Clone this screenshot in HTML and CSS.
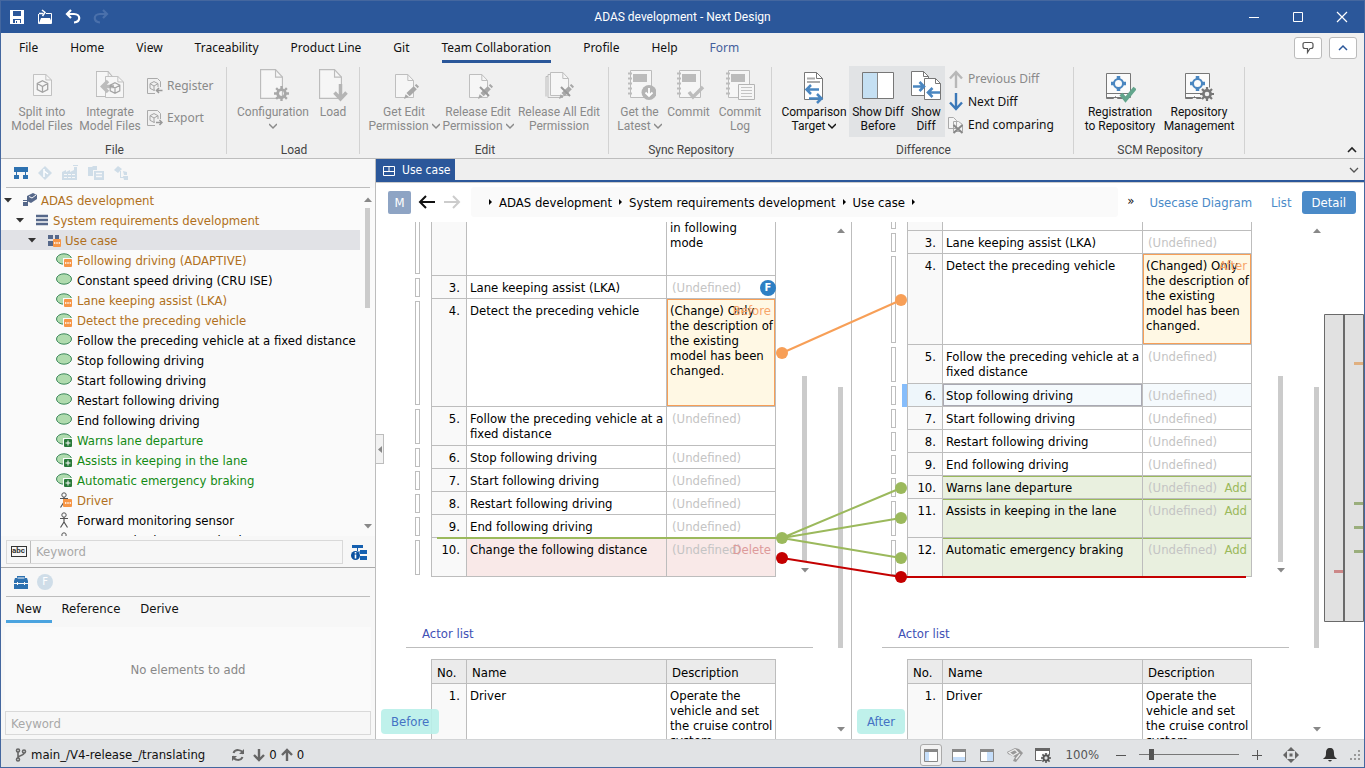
FILE: index.html
```html
<!DOCTYPE html>
<html lang="en">
<head>
    <meta charset="UTF-8">
    <meta name="viewport" content="width=device-width, initial-scale=1.0">
    <title>ADAS development - Next Design</title>
    <link rel="stylesheet" href="styles.css">
</head>
<body>
    <!-- Shared icons -->
    <svg class="sprite" width="0" height="0">
        <symbol id="i-oval" viewBox="0 0 18 16"><ellipse cx="8" cy="7" rx="7.5" ry="5.2" fill="#b0dbae" stroke="#3f8a5c"/></symbol>
        <symbol id="i-oval-mod" viewBox="0 0 18 16"><ellipse cx="8" cy="7" rx="7.5" ry="5.2" fill="#b0dbae" stroke="#3f8a5c"/><rect x="7" y="6" width="10" height="10" fill="#fafafa"/><rect x="8" y="7" width="8" height="8" rx="1" fill="#f79646"/><path d="M9 11h1.4M11.3 11h1.4M13.6 11h1.4" stroke="#fff" stroke-width="1.4"/></symbol>
        <symbol id="i-oval-add" viewBox="0 0 18 16"><ellipse cx="8" cy="7" rx="7.5" ry="5.2" fill="#b0dbae" stroke="#3f8a5c"/><rect x="7" y="6" width="10" height="10" fill="#fafafa"/><rect x="8" y="7" width="8" height="8" rx="1" fill="#2a7a3a"/><path d="M12 8.500v5M9.500 11h5" stroke="#fff"/></symbol>
        <symbol id="i-actor" viewBox="0 0 18 16"><g fill="none" stroke="#555"><circle cx="8" cy="3" r="2.200"/><path d="M4 6.500h8M8 5v5M8 10l-3.500 5.500M8 10l3.500 5.500" stroke-width="1.200"/></g></symbol>
        <symbol id="i-actor-mod" viewBox="0 0 18 16"><g fill="none" stroke="#555"><circle cx="8" cy="3" r="2.200"/><path d="M4 6.500h8M8 5v5M8 10l-3.500 5.500" stroke-width="1.200"/></g><rect x="7" y="7" width="9" height="8" rx="1" fill="#f79646"/><path d="M9 11h1.4M11.3 11h1.4M13.6 11h1.4" stroke="#fff" stroke-width="1.4"/></symbol>
        <symbol id="i-cube" viewBox="0 0 12 12"><path d="M6 .7l4.800 2.500v5.600L6 11.300 1.200 8.800V3.200zM1.200 3.200L6 6l4.800-2.800M6 6v5.300" fill="none" stroke="#a4a4a4" stroke-width="1.200"/></symbol>
        <symbol id="i-page" viewBox="0 0 20 24" preserveAspectRatio="none"><path d="M.5.5h13l6 6v17H.5z" fill="#f6f6f6" stroke="#bcbcbc"/><path d="M13.500.5v6h6" fill="none" stroke="#bcbcbc"/></symbol>
        <symbol id="i-gear" viewBox="0 0 14 14"><circle cx="7" cy="7" r="3.600" fill="none" stroke="currentColor" stroke-width="2.600"/><path d="M7 0v3M7 11v3M0 7h3M11 7h3M2 2l2.200 2.200M9.800 9.800L12 12M12 2L9.800 4.200M4.200 9.800L2 12" stroke="currentColor" stroke-width="2.200"/></symbol>
        <symbol id="i-pencil" viewBox="0 0 14 14"><path d="M0 14l1.500-4.500L4.500 12zM2.300 8.500L9 2l3 3-6.700 6.500zM10 1.200L11.500 0 14 2.400 12.800 4z" fill="#a8a8a8"/></symbol>
        <symbol id="i-book" viewBox="0 0 26 29"><path d="M3.500.5h21v27h-21z" fill="#f6f6f6" stroke="#bcbcbc"/><path d="M6 4h14v8H6z" fill="#bcbcbc"/><path d="M1 3.500h4M1 8.500h4M1 13.500h4M1 18.500h4M1 23.500h4" stroke="#bcbcbc" stroke-width="2"/></symbol>
        <symbol id="i-down" viewBox="0 0 8 8"><path d="M0 2l4 4 4-4" fill="none" stroke="currentColor" stroke-width="1.500"/></symbol>
        <symbol id="i-repo" viewBox="0 0 30 32"><path d="M2.500 2.500h24v24h-24z" fill="#fbfbfb" stroke="#777"/><path d="M2.500 22.500h24M2.500 22.500v5h7l2-2 2 2h6" fill="none" stroke="#777"/><circle cx="14.500" cy="12.500" r="4.500" fill="none" stroke="#4a86c0" stroke-width="2"/><path d="M14.500 5v3M14.500 17v3M7 12.500h3M19 12.500h3" stroke="#4a86c0" stroke-width="3.500"/></symbol>
        <symbol id="i-caret" viewBox="0 0 8 5"><path d="M0 0h8L4 4.500z" fill="currentColor"/></symbol>
    </svg>

    <header class="titlebar">
        <div class="quick">
            <button class="tb" aria-label="Save"><svg width="16" height="16"><path d="M1 1h14v14H1z" fill="#fff"/><path d="M4 2h8v5H4zM4 10h8v4H4z" fill="#2b579a"/><path d="M6 11h5v4H6z" fill="#fff"/><path d="M7 12h1v2H7z" fill="#2b579a"/></svg></button>
            <button class="tb" aria-label="Open"><svg width="16" height="16"><path d="M1.500 5v9.500h13V4.500H9" fill="none" stroke="#fff"/><path d="M2 14l2-5h9l2 5z" fill="#fff"/><path d="M2 4.500h4M5 1l3 2.500L5.500 7" fill="none" stroke="#fff" stroke-width="1.500"/></svg></button>
            <button class="tb" aria-label="Undo"><svg width="16" height="16"><path d="M6 1L2 5l4 4M2 5h7c7 0 7 8 0 8.500" fill="none" stroke="#fff" stroke-width="2.200"/></svg></button>
            <button class="tb" aria-label="Redo" disabled><svg width="16" height="16"><path d="M10 1l4 4-4 4M14 5H7c-7 0-7 8 0 8.500" fill="none" stroke="#4a70ab" stroke-width="2.200"/></svg></button>
        </div>
        <h1 class="title">ADAS development - Next Design</h1>
        <div class="winbtns">
            <button class="tb" aria-label="Minimize"><svg width="14" height="14"><path d="M2 7.500h10" stroke="#fff"/></svg></button>
            <button class="tb" aria-label="Maximize"><svg width="14" height="14"><path d="M2.500 2.500h9v9h-9z" fill="none" stroke="#fff"/></svg></button>
            <button class="tb" aria-label="Close"><svg width="14" height="14"><path d="M2 2l10 10M12 2L2 12" stroke="#fff" stroke-width="1.200"/></svg></button>
        </div>
    </header>

    <nav class="menu">
        <a href="#">File</a>
        <a href="#">Home</a>
        <a href="#">View</a>
        <a href="#">Traceability</a>
        <a href="#">Product Line</a>
        <a href="#">Git</a>
        <a href="#" class="active">Team Collaboration</a>
        <a href="#">Profile</a>
        <a href="#">Help</a>
        <a href="#" class="blue">Form</a>
        <div class="menu-right">
            <button aria-label="Feedback"><svg width="14" height="14"><path d="M4 1.500h6q2 0 2 2v2q0 2-2 2H9l-2.500 4v-4H4q-2 0-2-2v-2q0-2 2-2z" fill="none" stroke="#555" stroke-width="1.200"/></svg></button>
            <button aria-label="Collapse"><svg width="12" height="12"><path d="M2 8l4-4 4 4" fill="none" stroke="#2b579a" stroke-width="1.500"/></svg></button>
        </div>
    </nav>

    <section class="ribbon">
        <div class="group">
            <div class="tools">
                <button class="big w68" disabled><svg width="30" height="36"><use href="#i-page" x="6" y="5" width="19" height="22"/><use href="#i-cube" x="9" y="11" width="13" height="13"/></svg><span>Split into<br>Model Files</span></button>
                <button class="big w68" disabled><svg width="30" height="36"><use href="#i-page" x="1" y="2" width="18" height="26"/><use href="#i-page" x="10" y="7" width="19" height="22"/><path d="M19 17.500H8M13 12l-5.500 5.500L13 23" fill="none" stroke="#bcbcbc" stroke-width="3.500"/><use href="#i-cube" x="14" y="13" width="12" height="12"/></svg><span>Integrate<br>Model Files</span></button>
                <div class="smalls w77 two">
                    <button class="small" disabled><svg width="16" height="18"><path d="M.5 1.500h10l3 3v12H.5z" fill="none" stroke="#aaa"/><use href="#i-cube" x="2" y="4" width="10" height="10"/><path d="M8 10h8v8H8z" fill="#f0f0f0"/><path d="M15.500 13.500h-6M12 11l-2.500 2.500L12 16" fill="none" stroke="#999" stroke-width="1.500"/></svg>Register</button>
                    <button class="small" disabled><svg width="16" height="18"><path d="M.5 1.500h10l3 3v12H.5z" fill="none" stroke="#aaa"/><use href="#i-cube" x="2" y="4" width="10" height="10"/><path d="M8 10h8v8H8z" fill="#f0f0f0"/><path d="M9 13.500h6M12.500 11l2.500 2.500-2.500 2.500" fill="none" stroke="#999" stroke-width="1.500"/></svg>Export</button>
                </div>
            </div>
            <div class="caption">File</div>
        </div>
        <div class="group">
            <div class="tools">
                <button class="big w78" disabled><svg width="32" height="36"><use href="#i-page" x="3" y="0" width="23" height="30"/><use href="#i-gear" x="17" y="17" width="15" height="15" color="#a8a8a8"/></svg><span>Configuration<br><svg class="drop" width="8" height="8"><use href="#i-down"/></svg></span></button>
                <button class="big w42" disabled><svg width="32" height="36"><use href="#i-page" x="2" y="0" width="23" height="30"/><path d="M23.500 15v14M17.500 23.500l6 6.500 6-6.500" fill="none" stroke="#b5b5b5" stroke-width="3.500"/></svg><span>Load</span></button>
            </div>
            <div class="caption">Load</div>
        </div>
        <div class="group">
            <div class="tools">
                <button class="big w74" disabled><svg width="30" height="36"><use href="#i-page" x="6" y="5" width="19" height="24"/><use href="#i-pencil" x="15" y="15" width="15" height="15"/></svg><span>Get Edit<br>Permission <svg class="drop" width="8" height="8"><use href="#i-down"/></svg></span></button>
                <button class="big w74" disabled><svg width="30" height="36"><use href="#i-page" x="6" y="5" width="19" height="24"/><use href="#i-pencil" x="15" y="15" width="15" height="15"/><path d="M17 18l9 9" stroke="#999" stroke-width="2"/></svg><span>Release Edit<br>Permission <svg class="drop" width="8" height="8"><use href="#i-down"/></svg></span></button>
                <button class="big w88" disabled><svg width="30" height="36"><path d="M6.500 5.500H4v23h15M4 7.500H2v20" fill="none" stroke="#bcbcbc"/><use href="#i-page" x="6" y="3" width="19" height="24"/><use href="#i-pencil" x="15" y="15" width="15" height="15"/><path d="M17 18l9 9" stroke="#999" stroke-width="2"/></svg><span>Release All Edit<br>Permission</span></button>
            </div>
            <div class="caption">Edit</div>
        </div>
        <div class="group">
            <div class="tools">
                <button class="big w47" disabled><svg width="32" height="36"><use href="#i-book" x="3" y="1" width="26" height="29"/><circle cx="25" cy="23.500" r="7.500" fill="#b4b4b4"/><path d="M25 19v8M21.500 23.500L25 27l3.500-3.500" fill="none" stroke="#fff" stroke-width="1.800"/></svg><span>Get the<br>Latest <svg class="drop" width="8" height="8"><use href="#i-down"/></svg></span></button>
                <button class="big w51" disabled><svg width="32" height="36"><use href="#i-book" x="3" y="1" width="26" height="29"/><path d="M16 23l4 5 10-10" fill="none" stroke="#bcbcbc" stroke-width="3.500"/></svg><span>Commit</span></button>
                <button class="big w52" disabled><svg width="32" height="36"><use href="#i-book" x="1" y="1" width="26" height="29"/><path d="M14.500 15.500h16v15h-16z" fill="#f6f6f6" stroke="#b4b4b4"/><path d="M17 18.500h11M17 21.500h11M17 24.500h11M17 27.500h11" stroke="#c4c4c4"/></svg><span>Commit<br>Log</span></button>
            </div>
            <div class="caption">Sync Repository</div>
        </div>
        <div class="group">
            <div class="tools">
                <button class="big w70"><svg width="30" height="36"><path d="M5.500 3.500h12l6 6v21h-18z" fill="#fff" stroke="#777"/><path d="M17.500 3.500v6h6" fill="none" stroke="#777"/><path d="M8 9.500h8M8 13h13" stroke="#aaa" stroke-width="2"/><path d="M20 20.500H8M12 16l-4.500 4.500L12 25M10 29.500h12M18 25l4.500 4.500L18 34" fill="none" stroke="#4a86c0" stroke-width="2.500"/></svg><span>Comparison<br>Target <svg class="drop" width="8" height="8"><use href="#i-down"/></svg></span></button>
                <button class="big w58 on"><svg width="34" height="36"><path d="M1.500 3.500h31v26h-31z" fill="#fff" stroke="#777"/><path d="M2 4h14v25H2z" fill="#c5e0f3"/><path d="M16.500 4v25" stroke="#888"/></svg><span>Show Diff<br>Before</span></button>
                <button class="big w38 on"><svg width="32" height="36"><path d="M1.500 2.500h12l5 5v19h-17z" fill="#fff" stroke="#777"/><path d="M14.500 9.500h11l5 5v16h-16z" fill="#fff" stroke="#777"/><path d="M25.500 9.500v5h5M13.500 2.500v5h5" fill="none" stroke="#777"/><path d="M3 17.500h10M9.500 13l4.500 4.500L9.500 22M30 23.500H19M22.500 19L18 23.500l4.500 4.500" fill="none" stroke="#4a86c0" stroke-width="2.600"/></svg><span>Show<br>Diff</span></button>
                <div class="smalls w123">
                    <button class="small" disabled><svg width="16" height="18"><path d="M8 18V2M2 8.500L8 2l6 6.500" fill="none" stroke="#b8b8b8" stroke-width="2.400"/></svg>Previous Diff</button>
                    <button class="small"><svg width="16" height="18"><path d="M8 0v16M2 9.500L8 16l6-6.500" fill="none" stroke="#3b78b8" stroke-width="2.400"/></svg>Next Diff</button>
                    <button class="small"><svg width="16" height="18"><path d="M.5 12.500v-11h5l3 3v8zM5.500 15.500v-10h5l4 3v7z" fill="#f4f4f4" stroke="#aaa"/><path d="M5.500 9l9 8M14.500 9l-9 8" stroke="#888" stroke-width="2"/></svg>End comparing</button>
                </div>
            </div>
            <div class="caption">Difference</div>
        </div>
        <div class="group">
            <div class="tools">
                <button class="big w78"><svg width="32" height="36"><use href="#i-repo" x="0" y="2" width="30" height="32"/><path d="M17 25l4.500 5.500L31 19" fill="none" stroke="#62a58c" stroke-width="4"/></svg><span>Registration<br>to Repository</span></button>
                <button class="big w80"><svg width="32" height="36"><use href="#i-repo" x="0" y="2" width="30" height="32"/><circle cx="24" cy="25" r="7" fill="#f0f0f0"/><use href="#i-gear" x="17" y="18" width="14" height="14" color="#777"/></svg><span>Repository<br>Management</span></button>
            </div>
            <div class="caption">SCM Repository</div>
        </div>
        <button class="pin" aria-label="Collapse ribbon"><svg width="12" height="12"><path d="M2 8l4-4 4 4" fill="none" stroke="#222" stroke-width="1.600"/></svg></button>
    </section>

    <main class="main">
        <aside class="sidebar">
            <div class="bar">
                <svg width="16" height="16"><path d="M1 2h14v5H1zM1 10h5v4H1zM10 10h5v4h-5zM3 7h1v3H3zM12 7h1v3h-1z" fill="#2d71b0"/></svg>
                <svg width="16" height="16"><path d="M8 1l7 7-7 7-7-7z" fill="#cfdde8"/><path d="M7 4v8M7 6l4 3" stroke="#fff" stroke-width="1.500"/></svg>
                <svg width="18" height="16"><path d="M1 15V7l4-2v2l4-2v2l4-2V2h3v13zM12 0h5v1h-5z" fill="#cfdde8"/><path d="M3 9.500h11M3 12.500h11" stroke="#f8f8f8" stroke-dasharray="3 1"/></svg>
                <svg width="18" height="16"><path d="M1 2h4l1-1h4v4H6v6H1zM7 6h10v9H7z" fill="#cfdde8"/><path d="M9 8.500h6M9 11.500h6" stroke="#f8f8f8" stroke-width="1.500"/></svg>
                <svg width="16" height="16"><path d="M5 1l4 3-4 4-4-3zM10 6l4 1v3h-3zM10 11h5v4h-4zM7 6h1v6h3v1H7z" fill="#cfdde8"/></svg>
            </div>
            <div class="treebox">
                <ul class="tree">
                    <li class="l0 mod"><svg class="tri" width="8" height="5"><use href="#i-caret"/></svg><svg width="16" height="16"><path d="M5 4l6-3 4 2v4l-6 4-4-2z" fill="#56688a"/><path d="M7 4.500l3 1.500 4-3" fill="none" stroke="#fafafa"/><path d="M1 8h5v6H1z" fill="#56688a"/><path d="M1 9.500h4" stroke="#fafafa"/></svg>ADAS development</li>
                    <li class="l1 mod"><svg class="tri" width="8" height="5"><use href="#i-caret"/></svg><svg width="16" height="16"><path d="M2 4h12M2 8h12M2 12h12" stroke="#56688a" stroke-width="2.500"/></svg>System requirements development</li>
                    <li class="l2 mod sel"><svg class="tri" width="8" height="5"><use href="#i-caret"/></svg><svg width="16" height="16"><path d="M2 3h5v4H2zM9 3h4v4H9zM2 9h5v5H2z" fill="#56688a"/><rect x="7" y="7" width="8" height="8" rx="1" fill="#f79646"/><path d="M8 11h1.400M10.300 11h1.400M12.600 11h1.400" stroke="#fff" stroke-width="1.400"/></svg>Use case</li>
                    <li class="l3 mod"><svg width="18" height="16"><use href="#i-oval-mod"/></svg>Following driving (ADAPTIVE)</li>
                    <li class="l3"><svg width="18" height="16"><use href="#i-oval"/></svg>Constant speed driving (CRU ISE)</li>
                    <li class="l3 mod"><svg width="18" height="16"><use href="#i-oval-mod"/></svg>Lane keeping assist (LKA)</li>
                    <li class="l3 mod"><svg width="18" height="16"><use href="#i-oval-mod"/></svg>Detect the preceding vehicle</li>
                    <li class="l3"><svg width="18" height="16"><use href="#i-oval"/></svg>Follow the preceding vehicle at a fixed distance</li>
                    <li class="l3"><svg width="18" height="16"><use href="#i-oval"/></svg>Stop following driving</li>
                    <li class="l3"><svg width="18" height="16"><use href="#i-oval"/></svg>Start following driving</li>
                    <li class="l3"><svg width="18" height="16"><use href="#i-oval"/></svg>Restart following driving</li>
                    <li class="l3"><svg width="18" height="16"><use href="#i-oval"/></svg>End following driving</li>
                    <li class="l3 add"><svg width="18" height="16"><use href="#i-oval-add"/></svg>Warns lane departure</li>
                    <li class="l3 add"><svg width="18" height="16"><use href="#i-oval-add"/></svg>Assists in keeping in the lane</li>
                    <li class="l3 add"><svg width="18" height="16"><use href="#i-oval-add"/></svg>Automatic emergency braking</li>
                    <li class="l3 mod"><svg width="18" height="16"><use href="#i-actor-mod"/></svg>Driver</li>
                    <li class="l3"><svg width="18" height="16"><use href="#i-actor"/></svg>Forward monitoring sensor</li>
                    <li class="l3"><svg width="18" height="16"><use href="#i-actor"/></svg>Rear monitoring sensor back</li>
                </ul>
                <div class="scroll tree-scroll"><svg class="up" width="8" height="5"><use href="#i-caret"/></svg><i class="thumb"></i><svg width="8" height="5"><use href="#i-caret"/></svg></div>
            </div>
            <div class="search">
                <div class="field">
                    <button class="abc" aria-label="Match mode"><span>abc</span></button>
                    <input type="text" placeholder="Keyword" aria-label="Tree keyword">
                </div>
                <svg width="18" height="18"><path d="M2 2h11v3H2zM10 7h7v4h-7zM10 13h7v4h-7zM7 5h1v3H7zM8 8.500h2v1H8z" fill="#1560b0"/><circle cx="5.500" cy="12.500" r="4.500" fill="#0a50a0"/><path d="M5.500 9v1.500M5.500 11.500v4" stroke="#fff" stroke-width="1.600"/></svg>
            </div>
            <div class="bar toolbox">
                <svg width="16" height="16"><path d="M4 4V2h8v2h2l1 3v8H1V7l1-3z" fill="#2d71b0"/><path d="M4.500 4h7M1 9.500h14" stroke="#f8f8f8"/><path d="M4.500 8v3M11.500 8v3" stroke="#f8f8f8"/></svg>
                <span class="fdot">F</span>
            </div>
            <div class="subtabs">
                <button class="active">New</button>
                <button>Reference</button>
                <button>Derive</button>
            </div>
            <div class="empty">No elements to add</div>
            <input class="keyword2" type="text" placeholder="Keyword" aria-label="Element keyword">
        </aside>

        <section class="doc">
            <div class="doctabs">
                <a href="#" class="doctab"><svg width="14" height="12"><path d="M1.500 1.500h11v9h-11zM1 6.500h12M7 1v5" fill="none" stroke="#fff"/></svg>Use case</a>
                <svg class="more" width="10" height="10"><path d="M1 3l4 4 4-4" fill="none" stroke="#555" stroke-width="1.300"/></svg>
                <button class="collapse" aria-label="Collapse sidebar"><svg width="4" height="7"><path d="M4 0v7L0 3.500z" fill="#888"/></svg></button>
            </div>
            <div class="crumbbar">
                <span class="m">M</span>
                <svg width="18" height="14"><path d="M17 7H2M8 1L2 7l6 6" fill="none" stroke="#111" stroke-width="2"/></svg>
                <svg width="18" height="14"><path d="M1 7h15M10 1l6 6-6 6" fill="none" stroke="#ccc" stroke-width="2"/></svg>
                <nav class="crumbs"><i></i><a href="#">ADAS development</a><i></i><a href="#">System requirements development</a><i></i><a href="#">Use case</a><i></i></nav>
                <span class="chev">»</span>
                <nav class="views"><a href="#">Usecase Diagram</a><a href="#">List</a><a href="#" class="current">Detail</a></nav>
            </div>

            <div class="compare">
                <div class="pane">
                    <div class="page">
                        <div class="formgrid">
                            <table class="grid">
                                <colgroup><col class="c-grip"><col class="c-no"><col class="c-name"><col class="c-desc"></colgroup>
                                <tr class="cut59"><td class="grip"></td><td class="no"></td><td></td><td>in following<br>mode</td></tr>
                                <tr><td class="grip"></td><td class="no">3.</td><td>Lane keeping assist (LKA)</td><td class="undef">(Undefined)<b class="fbadge">F</b></td></tr>
                                <tr class="h108"><td class="grip"></td><td class="no">4.</td><td>Detect the preceding vehicle</td><td class="changed">(Change) Only the description of the existing model has been changed.<span class="tag">Before</span></td></tr>
                                <tr class="h39"><td class="grip"></td><td class="no">5.</td><td>Follow the preceding vehicle at a fixed distance</td><td class="undef">(Undefined)</td></tr>
                                <tr><td class="grip"></td><td class="no">6.</td><td>Stop following driving</td><td class="undef">(Undefined)</td></tr>
                                <tr><td class="grip"></td><td class="no">7.</td><td>Start following driving</td><td class="undef">(Undefined)</td></tr>
                                <tr><td class="grip"></td><td class="no">8.</td><td>Restart following driving</td><td class="undef">(Undefined)</td></tr>
                                <tr><td class="grip"></td><td class="no">9.</td><td>End following driving</td><td class="undef">(Undefined)</td></tr>
                                <tr class="h39 deleted"><td class="grip"></td><td class="no">10.</td><td>Change the following distance</td><td class="undef">(Undefined)<span class="tag">Delete</span></td></tr>
                            </table>
                            <div class="scroll inner-scroll"><i class="thumb"></i><svg width="8" height="5"><use href="#i-caret"/></svg></div>
                        </div>
                        <h2>Actor list</h2>
                        <table class="grid actors">
                            <colgroup><col class="c-no"><col class="c-name"><col class="c-desc"></colgroup>
                            <tr><th>No.</th><th>Name</th><th>Description</th></tr>
                            <tr><td class="no">1.</td><td>Driver</td><td>Operate the vehicle and set the cruise control system</td></tr>
                        </table>
                    </div>
                    <div class="scroll outer-scroll"><svg class="up" width="8" height="5"><use href="#i-caret"/></svg><i class="thumb"></i><svg width="8" height="5"><use href="#i-caret"/></svg></div>
                    <span class="side">Before</span>
                </div>
                <div class="pane">
                    <div class="page">
                        <div class="formgrid">
                            <table class="grid">
                                <colgroup><col class="c-grip"><col class="c-no"><col class="c-name"><col class="c-desc"></colgroup>
                                <tr class="cut14"><td class="grip"></td><td class="no"></td><td></td><td></td></tr>
                                <tr><td class="grip"></td><td class="no">3.</td><td>Lane keeping assist (LKA)</td><td class="undef">(Undefined)</td></tr>
                                <tr class="h91"><td class="grip"></td><td class="no">4.</td><td>Detect the preceding vehicle</td><td class="changed">(Changed) Only the description of the existing model has been changed.<span class="tag">After</span></td></tr>
                                <tr class="h39"><td class="grip"></td><td class="no">5.</td><td>Follow the preceding vehicle at a fixed distance</td><td class="undef">(Undefined)</td></tr>
                                <tr class="focus"><td class="grip"></td><td class="no">6.</td><td class="cell">Stop following driving</td><td class="undef">(Undefined)</td></tr>
                                <tr><td class="grip"></td><td class="no">7.</td><td>Start following driving</td><td class="undef">(Undefined)</td></tr>
                                <tr><td class="grip"></td><td class="no">8.</td><td>Restart following driving</td><td class="undef">(Undefined)</td></tr>
                                <tr><td class="grip"></td><td class="no">9.</td><td>End following driving</td><td class="undef">(Undefined)</td></tr>
                                <tr class="added"><td class="grip"></td><td class="no">10.</td><td>Warns lane departure</td><td class="undef">(Undefined)<span class="tag">Add</span></td></tr>
                                <tr class="h39 added"><td class="grip"></td><td class="no">11.</td><td>Assists in keeping in the lane</td><td class="undef">(Undefined)<span class="tag">Add</span></td></tr>
                                <tr class="h39 added"><td class="grip"></td><td class="no">12.</td><td>Automatic emergency braking</td><td class="undef">(Undefined)<span class="tag">Add</span></td></tr>
                            </table>
                            <div class="scroll inner-scroll"><i class="thumb"></i><svg width="8" height="5"><use href="#i-caret"/></svg></div>
                        </div>
                        <h2>Actor list</h2>
                        <table class="grid actors">
                            <colgroup><col class="c-no"><col class="c-name"><col class="c-desc"></colgroup>
                            <tr><th>No.</th><th>Name</th><th>Description</th></tr>
                            <tr><td class="no">1.</td><td>Driver</td><td>Operate the vehicle and set the cruise control system</td></tr>
                        </table>
                    </div>
                    <div class="scroll outer-scroll"><svg class="up" width="8" height="5"><use href="#i-caret"/></svg><i class="thumb"></i><svg width="8" height="5"><use href="#i-caret"/></svg></div>
                    <span class="side">After</span>
                </div>
                <div class="minimap">
                    <svg width="40" height="308"><path d="M.5.5h19v307H.5zM20.500.5h19v307h-19z" fill="#e1e1e1" stroke="#6a6a6a"/><path d="M20 0v308" stroke="#6a6a6a" stroke-width="2"/><path d="M30 49.500h9" stroke="#e0b080" stroke-width="3"/><path d="M30 189.500h9M30 213.500h9M30 237.500h9" stroke="#9aae7c" stroke-width="3"/><path d="M10 257.500h9" stroke="#cc8888" stroke-width="3"/></svg>
                </div>
                <!-- Lines joining the changed rows of both panes -->
                <svg class="links" width="988" height="517" viewBox="376 222 988 517">
                    <path d="M782 353L901 300" stroke="#f79f57" stroke-width="2"/>
                    <circle cx="782" cy="353" r="6" fill="#f79f57"/><circle cx="901" cy="300" r="6" fill="#f79f57"/>
                    <path d="M437 538H782L901 488M782 538L901 518M782 538L901 558" fill="none" stroke="#9bb95c" stroke-width="2"/>
                    <circle cx="782" cy="538" r="6" fill="#9bb95c"/><circle cx="901" cy="488" r="6" fill="#9bb95c"/><circle cx="901" cy="518" r="6" fill="#9bb95c"/><circle cx="901" cy="558" r="6" fill="#9bb95c"/>
                    <path d="M782 558L901 577H1246" fill="none" stroke="#c40000" stroke-width="2"/>
                    <circle cx="782" cy="558" r="6" fill="#c40000"/><circle cx="901" cy="577" r="6" fill="#c40000"/>
                </svg>
            </div>
        </section>
    </main>

    <footer class="status">
        <svg width="12" height="14"><g fill="none" stroke="#666" stroke-width="1.600"><circle cx="3" cy="2.500" r="1.500"/><circle cx="3" cy="11.500" r="1.500"/><circle cx="9" cy="3.500" r="1.500"/><path d="M3 4v6M9 5c0 3-6 2-6 5"/></g></svg>
        <span class="branch">main_/V4-release_/translating</span>
        <svg width="14" height="14"><path d="M12 6C11 1 4 1 2.500 5M2 8c1 5 8 5 9.500 1" fill="none" stroke="#666" stroke-width="2"/><path d="M13 1v5H8zM1 13V8h5z" fill="#666"/></svg>
        <svg class="gap8" width="12" height="14"><path d="M6 1v11M1 7l5 5 5-5" fill="none" stroke="#666" stroke-width="2.400"/></svg>
        <span>0</span>
        <svg width="12" height="14"><path d="M6 13V2M1 7l5-5 5 5" fill="none" stroke="#666" stroke-width="2.400"/></svg>
        <span>0</span>
        <div class="status-right">
            <div class="layouts">
                <button class="pressed" aria-label="Left panel"><svg width="16" height="14"><path d="M1.500 1.500h13v12h-13z" fill="#fff" stroke="#888"/><path d="M1 1h14v3H1z" fill="#888"/><path d="M2 4h4v9H2z" fill="#c5defa"/></svg></button>
                <button aria-label="Bottom panel"><svg width="16" height="14"><path d="M1.500 1.500h13v12h-13z" fill="#fff" stroke="#888"/><path d="M1 1h14v3H1z" fill="#888"/><path d="M2 9h12v4H2z" fill="#c5defa"/></svg></button>
                <button aria-label="Right panel"><svg width="16" height="14"><path d="M1.500 1.500h13v12h-13z" fill="#fff" stroke="#888"/><path d="M1 1h14v3H1z" fill="#888"/><path d="M8 4h6v9H8z" fill="#c5defa"/></svg></button>
                <button aria-label="Model check"><svg width="18" height="16"><path d="M1 5l8-4 4 1 4 4-7 9-3-1 2-4-7-3z" fill="#999"/><path d="M3 5.500l6-3 3 3-5 3zM10 12l4-5" fill="none" stroke="#eee" stroke-width="1.300"/></svg></button>
                <button aria-label="View settings"><svg width="18" height="16"><path d="M1.500 2.500h14v11h-14z" fill="#fff" stroke="#666"/><path d="M1 1h15v3H1z" fill="#666"/><circle cx="12" cy="11" r="5" fill="#e1e3e5"/><use href="#i-gear" x="7" y="6" width="10" height="10" color="#555"/></svg></button>
            </div>
            <span class="zoom">100%</span>
            <svg width="12" height="12"><path d="M1 6.500h10" stroke="#555"/></svg>
            <input type="range" min="0" max="100" value="10" aria-label="Zoom">
            <svg width="12" height="12"><path d="M1 6.500h10M6.500 1v10" stroke="#555"/></svg>
            <svg class="move" width="16" height="16"><path d="M8 0l4 4H4zM8 16l4-4H4zM0 8l4-4v8zM16 8l-4-4v8zM6.500 6.500h3v3h-3z" fill="#666"/></svg>
            <svg class="bell" width="14" height="16"><path d="M7 1c3 0 4 2 4 5 0 4 1 4 3 6H0c2-2 3-2 3-6 0-3 1-5 4-5zM5 13h4q-2 3-4 0z" fill="#333"/></svg>
            <svg width="12" height="12"><path d="M9 1h2v2H9zM5 5h2v2H5zM9 5h2v2H9zM1 9h2v2H1zM5 9h2v2H5zM9 9h2v2H9z" fill="#999"/></svg>
        </div>
    </footer>
</body>
</html>
```
FILE: styles.css
```css
:root {
    --blue: #2b579a;
    --line: #bdbdbd;
    --mod: #b07020;
    --add: #148a14;
    --ui: "Noto Sans", sans-serif;
    --ribbon: Roboto, "Noto Sans", sans-serif;
    --doc: "DejaVu Sans Condensed", "Noto Sans", sans-serif;
}

*, *::before {
    box-sizing: border-box;
}

body {
    margin: 0;
    height: 100vh;
    display: flex;
    flex-direction: column;
    overflow: hidden;
    border: 1px solid #44679f;
    border-top: 0;
    background: #f0f0f0;
    font-family: var(--doc);
    font-size: 13px;
    line-height: 15px;
    color: #111;
}

svg {
    display: block;
    flex-shrink: 0;
}

.sprite {
    position: absolute;
}

button {
    margin: 0;
    padding: 0;
    border: 0;
    background: none;
    font: inherit;
    color: inherit;
}

input {
    font: inherit;
    color: #333;
    border-radius: 0;
}

input::placeholder {
    color: #a8a8a8;
}

a {
    color: inherit;
    text-decoration: none;
}

/* Title bar */
.titlebar {
    height: 33px;
    flex-shrink: 0;
    display: grid;
    grid-template-columns: 1fr auto 1fr;
    align-items: center;
    background: var(--blue);
    border-top: 1px solid #44679f;
    color: #fff;
    font-family: var(--ribbon);
}

.title {
    margin: 0;
    font-size: 12px;
    font-weight: normal;
}

.quick {
    display: flex;
    gap: 12px;
    padding-left: 8px;
}

.winbtns {
    display: flex;
    justify-content: flex-end;
    gap: 30px;
    padding-right: 15px;
}

/* Menu */
.menu {
    height: 33px;
    flex-shrink: 0;
    display: flex;
    align-items: center;
    gap: 32px;
    padding: 0 7px 3px 18px;
    font-family: var(--ui);
    font-size: 12px;
}

.menu > a {
    padding: 7px 0 5px;
    border-bottom: 3px solid transparent;
    height: 30px;
}

.menu .active {
    border-bottom-color: var(--blue);
}

.menu .blue {
    color: #44609c;
}

.menu-right {
    margin-left: auto;
    display: flex;
    gap: 7px;
}

.menu-right button {
    width: 28px;
    height: 22px;
    display: flex;
    align-items: center;
    justify-content: center;
    background: #fff;
    border: 1px solid #bbb;
    border-radius: 3px;
}

/* Ribbon */
.ribbon {
    height: 93px;
    flex-shrink: 0;
    display: flex;
    align-items: flex-start;
    border-bottom: 1px solid var(--line);
    font-family: var(--ribbon);
    font-size: 12px;
    line-height: 14px;
}

.group {
    margin-top: 1px;
    height: 87px;
    padding: 0 5px 0 7px;
    border-right: 1px solid #d2d2d2;
    display: flex;
    flex-direction: column;
}

.tools {
    display: flex;
    margin-top: -1px;
    height: 71px;
}

.caption {
    margin-top: 6px;
    text-align: center;
    color: #444;
}

.big {
    height: 71px;
    padding-top: 3px;
    display: flex;
    flex-direction: column;
    align-items: center;
    text-align: center;
    white-space: nowrap;
}

.drop {
    display: inline-block;
    vertical-align: 0;
}

.big:disabled, .small:disabled {
    color: #8a8a8a;
}

.on {
    background: #e1e3e5;
}

.w42 { width: 42px; }
.w38 { width: 38px; }
.w47 { width: 47px; }
.w51 { width: 51px; }
.w52 { width: 52px; }
.w58 { width: 58px; }
.w68 { width: 68px; }
.w70 { width: 70px; }
.w74 { width: 74px; }
.w77 { width: 77px; }
.w78 { width: 78px; }
.w80 { width: 80px; }
.w88 { width: 88px; }
.w123 { width: 123px; }

.smalls {
    display: flex;
    flex-direction: column;
    padding: 1px 0 0 3px;
}

.smalls.two {
    padding-top: 4px;
}

.two .small {
    height: 32px;
}

.small {
    height: 24px;
    display: flex;
    align-items: center;
    gap: 4px;
    font-family: var(--ui);
    white-space: nowrap;
}

.pin {
    margin: 78px 6px 0 auto;
}

/* Main area */
.main {
    flex: 1;
    min-height: 0;
    display: flex;
}

.sidebar {
    width: 375px;
    flex-shrink: 0;
    display: flex;
    flex-direction: column;
    background: #f7f7f7;
    border-right: 1px solid var(--line);
}

.bar {
    height: 29px;
    margin: 0 5px;
    padding: 0 7px;
    display: flex;
    align-items: center;
    gap: 8px;
    border-bottom: 1px solid var(--line);
}

.treebox {
    flex: 1;
    min-height: 0;
    display: flex;
    padding-top: 2px;
    background: #fafafa;
    overflow: hidden;
}

.tree {
    flex: 1;
    margin: 0;
    padding: 0;
    list-style: none;
    color: #000;
}

.tree li {
    height: 20px;
    display: flex;
    align-items: center;
    gap: 3px;
    white-space: nowrap;
}

.tree .tri {
    margin-right: 7px;
    color: #333;
}

.tree .l0 { padding-left: 3px; }
.tree .l1 { padding-left: 15px; }
.tree .l2 { padding-left: 27px; }
.tree .l3 { padding-left: 55px; }
.tree .mod { color: var(--mod); }
.tree .add { color: var(--add); }
.tree .sel { background: #e1e2e6; }

.scroll {
    width: 15px;
    display: flex;
    flex-direction: column;
    align-items: center;
    color: #888;
}

.scroll .thumb {
    width: 5px;
    background: #cbcbcb;
}

.scroll svg:last-child {
    margin-top: auto;
}

.scroll .up {
    transform: rotate(180deg);
}

.tree-scroll {
    padding: 7px 0;
}

.tree-scroll .thumb {
    height: 100px;
    margin-top: 6px;
}

.search {
    height: 32px;
    display: flex;
    align-items: center;
    gap: 7px;
    padding: 0 7px 0 5px;
    border-bottom: 1px solid #aaa;
}

.field {
    flex: 1;
    display: flex;
    height: 24px;
    border: 1px solid #d9d9d9;
}

.abc {
    width: 24px;
    display: flex;
    align-items: center;
    justify-content: center;
    border-right: 1px solid var(--line);
}

.abc span {
    border: 1px solid #333;
    font-family: var(--ribbon);
    font-size: 8px;
    font-weight: bold;
    line-height: 8px;
    height: 11px;
    width: 16px;
    color: #333;
}

.field input, .keyword2 {
    flex: 1;
    min-width: 0;
    padding: 0 5px;
    border: 0;
    background: none;
}

.toolbox {
    flex-shrink: 0;
}

.fdot {
    width: 16px;
    height: 16px;
    border-radius: 8px;
    background: #cfdde8;
    color: #fff;
    font-size: 11px;
    text-align: center;
}

.subtabs {
    display: flex;
    height: 26px;
    padding-left: 5px;
}

.subtabs button {
    padding: 0 10px 1px;
    border-bottom: 3px solid transparent;
}

.subtabs .active {
    border-bottom-color: #4aa3df;
}

.empty {
    height: 84px;
    margin: 4px 4px 0;
    display: flex;
    align-items: center;
    justify-content: center;
    background: #fafafa;
    color: #888;
}

.keyword2 {
    flex: none;
    height: 24px;
    margin: 0 4px 4px;
    border: 1px solid #d9d9d9;
}

/* Document */
.doc {
    flex: 1;
    min-width: 0;
    display: flex;
    flex-direction: column;
    background: #fff;
}

.doctabs {
    position: relative;
    height: 23px;
    flex-shrink: 0;
    display: flex;
    align-items: center;
    justify-content: space-between;
    padding-right: 5px;
    background: #efefef;
    border-bottom: 2px solid var(--blue);
    box-shadow: 0 1px 0 #ccc;
}

.doctab {
    height: 22px;
    display: flex;
    align-items: center;
    gap: 6px;
    padding: 2px 5px 0 6px;
    background: var(--blue);
    color: #fff;
    font-size: 12px;
}

/* Handle on the edge of the sidebar */
.collapse {
    position: absolute;
    left: 0;
    top: 275px;
    width: 8px;
    height: 30px;
    padding-left: 2px;
    background: #f2f2f2;
    border: 1px solid var(--line);
    border-left: 0;
}

.crumbbar {
    height: 40px;
    flex-shrink: 0;
    display: flex;
    align-items: center;
    gap: 7px;
    padding: 0 8px 0 12px;
}

.m {
    width: 23px;
    height: 23px;
    border-radius: 2px;
    background: #8ea4c4;
    color: #fff;
    line-height: 23px;
    text-align: center;
}

.crumbs {
    flex: 1;
    height: 30px;
    margin-left: 3px;
    display: flex;
    align-items: center;
    gap: 7px;
    padding-left: 18px;
    background: #fafafa;
    border-radius: 3px;
    color: #000;
}

.crumbs i {
    border: 3px solid transparent;
    border-left-color: #000;
    border-right: 0;
}

.chev {
    padding: 0 8px 4px 2px;
}

.views {
    display: flex;
    align-items: center;
    gap: 10px;
    color: #4a8ac8;
}

.views a:first-child {
    margin-right: 9px;
}

.views .current {
    height: 23px;
    padding: 4px 10px;
    background: #4a8ac8;
    color: #fff;
    border-radius: 3px;
}

/* Comparison panes */
.compare {
    position: relative;
    flex: 1;
    min-height: 0;
    display: grid;
    grid-template-columns: 1fr 1fr 36px;
    overflow: hidden;
}

.pane {
    position: relative;
    min-width: 0;
    display: flex;
    overflow: hidden;
    border-right: 1px solid var(--line);
}

.pane + .pane {
    border-right: 0;
    padding-right: 1px;
}

.page {
    flex: 1;
    padding-left: 30px;
}

.formgrid {
    display: flex;
    height: 355px;
    padding-left: 9px;
}

.grid {
    border-collapse: separate;
    border-spacing: 0;
    table-layout: fixed;
    width: 361px;
    margin-top: -6px;
    color: #000;
}

.c-grip { width: 16px; }
.c-no { width: 36px; }
.c-name { width: 200px; }
.c-desc { width: 109px; }

.grid tr {
    height: 23px;
}

.grid td {
    position: relative;
    padding: 4px 0 3px 3px;
    vertical-align: top;
    border-right: 1px solid var(--line);
    border-bottom: 1px solid var(--line);
}

.grid .grip {
    border: 0;
}

.grip::before {
    content: "";
    position: absolute;
    left: 0;
    top: 2px;
    bottom: 2px;
    width: 5px;
    border: 1px solid var(--line);
}

.grid .no {
    padding-right: 6px;
    text-align: right;
    background: #f9f9f9;
    border-left: 1px solid var(--line);
}

.grid .h39 { height: 39px; }
.grid .h91 { height: 91px; }
.grid .h108 { height: 108px; }
.grid .cut59 { height: 60px; }
.grid .cut14 { height: 15px; }

.grid .undef {
    padding-left: 5px;
    color: #c4c4c4;
}

.grid .changed {
    background: #fff8e4;
    box-shadow: inset 0 0 0 1px #f79f57;
}

.tag {
    position: absolute;
    right: 4px;
    top: 4px;
    color: #f7a56a;
}

.fbadge {
    position: absolute;
    right: -1px;
    top: 4px;
    width: 16px;
    height: 16px;
    border-radius: 8px;
    background: #2d7fc4;
    color: #fff;
    font-size: 11px;
    line-height: 16px;
    text-align: center;
}

.deleted td {
    background: #f9e9e8;
}

.deleted .grip, .added .grip, .focus .grip {
    background: none;
}

.deleted .tag {
    color: #dd9a9a;
}

.added td {
    background: #e9f0df;
    box-shadow: inset 0 1px 0 #9bb95c;
}

.added .grip, .added .no {
    box-shadow: none;
}

.added .no, .deleted .no {
    background: #f9f9f9;
}

.added .tag {
    color: #9bb95c;
}

.focus td {
    background: #f5fafd;
}

.focus .no {
    background: #eef6fb;
}

.focus .cell {
    box-shadow: inset 0 0 0 1px #a9a9b3;
}

.focus .grip {
    box-shadow: inset -5px 0 0 #86bdfb;
}

.inner-scroll {
    margin-left: 21px;
    padding: 154px 0 4px;
}

.inner-scroll .thumb {
    height: 186px;
}

.outer-scroll {
    margin-right: 3px;
    padding: 6px 0 7px;
}

.outer-scroll .thumb {
    height: 261px;
    margin-top: 154px;
}

.page h2 {
    height: 71px;
    margin: 0 20px 0 0;
    padding: 49px 0 0 16px;
    border-bottom: 1px solid var(--line);
    font-size: 13px;
    font-weight: normal;
    color: #3f51b5;
}

.actors {
    width: 345px;
    margin: 11px 0 0 25px;
    border-top: 1px solid var(--line);
}

.actors th {
    height: 24px;
    padding: 2px 5px 0;
    text-align: left;
    font-weight: normal;
    background: #ebebeb;
    border-right: 1px solid var(--line);
    border-bottom: 1px solid var(--line);
}

.actors th:first-child {
    border-left: 1px solid var(--line);
}

.side {
    position: absolute;
    left: 5px;
    bottom: 5px;
    height: 25px;
    padding: 5px 10px;
    border-radius: 4px;
    background: rgba(184, 240, 233, 0.9);
    color: #4472c4;
}

.minimap {
    margin: 92px 0 0 -4px;
    position: relative;
}

.links {
    position: absolute;
    left: 0;
    top: 0;
    pointer-events: none;
}

/* Status bar */
.status {
    height: 28px;
    flex-shrink: 0;
    display: flex;
    align-items: center;
    gap: 4px;
    padding: 2px 3px 0 14px;
    background: #e1e3e5;
    border-top: 1px solid #d2d4d6;
}

.branch {
    margin-right: 22px;
}

.gap8 {
    margin-left: 4px;
}

.status-right {
    margin-left: auto;
    display: flex;
    align-items: center;
    gap: 12px;
    color: #555;
}

.layouts {
    display: flex;
    gap: 6px;
}

.layouts button {
    width: 22px;
    height: 22px;
    display: flex;
    align-items: center;
    justify-content: center;
}

.layouts .pressed {
    background: #f2f2f2;
    border: 1px solid #aaa;
    border-radius: 3px;
}

.zoom {
    margin-right: 4px;
}

input[type=range] {
    width: 100px;
    height: 12px;
    margin: 0;
    appearance: none;
    background: linear-gradient(#777, #777) center / 100% 1px no-repeat;
}

input[type=range]::-webkit-slider-thumb {
    appearance: none;
    width: 5px;
    height: 11px;
    background: #555;
}

.move {
    margin-left: 8px;
}

.bell {
    margin-left: 12px;
}
```
